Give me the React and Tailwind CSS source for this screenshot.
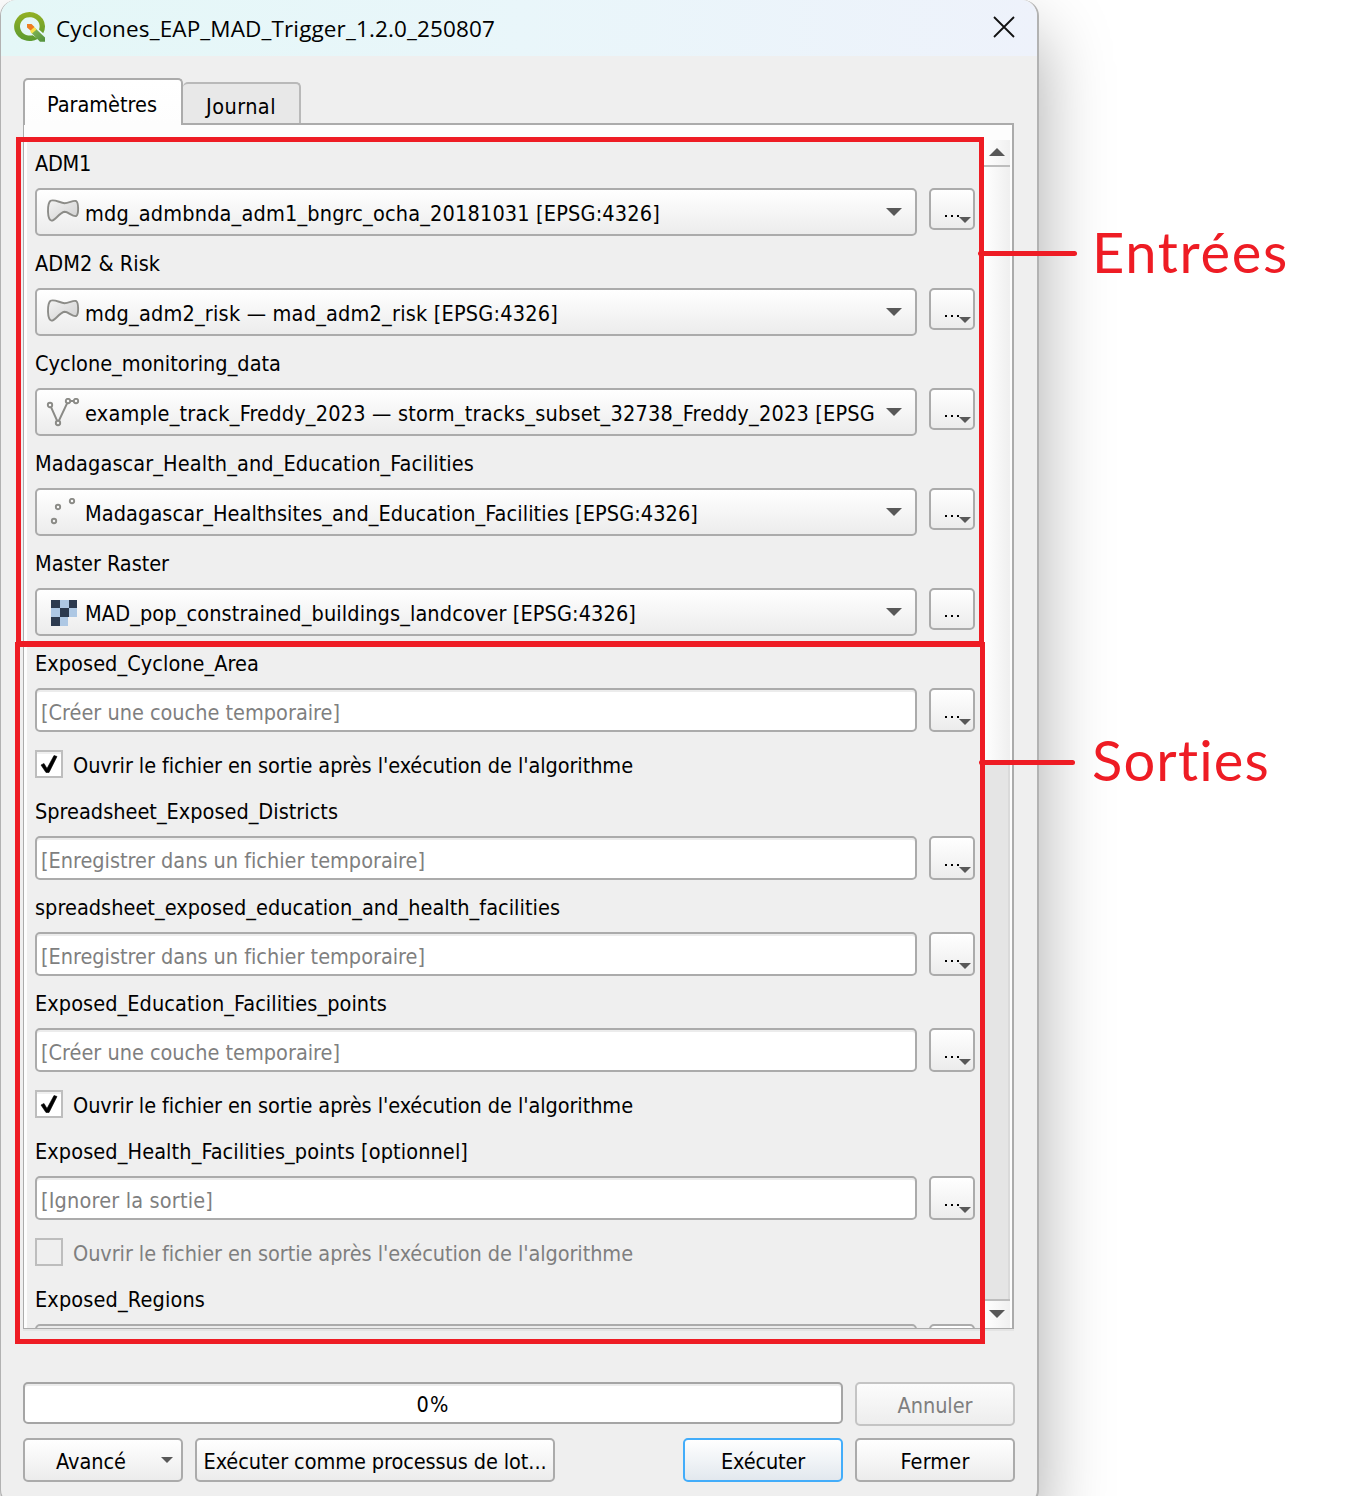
import { useLayoutEffect, useRef, useState } from "react";

// Text set to a given line length by tracking.
function Fit({ w, children, className = "" }) {
  const ref = useRef(null);
  const [spacing, setSpacing] = useState(0);
  useLayoutEffect(() => {
    const natural = ref.current.getBoundingClientRect().width;
    setSpacing((w - natural) / children.length);
  }, []);
  return (
    <span
      ref={ref}
      className={"inline-block whitespace-pre " + className}
      style={{ letterSpacing: spacing + "px" }}
    >
      {children}
    </span>
  );
}

function PolygonIcon() {
  return (
    <svg className="mt-px" width="34" height="26" viewBox="0 0 34 26" fill="none">
      <defs>
        <linearGradient id="poly" x1="0" y1="0" x2="1" y2="1">
          <stop offset="0" stopColor="#f4f4f4" />
          <stop offset="1" stopColor="#cfcfcf" />
        </linearGradient>
      </defs>
      <path
        d="M4.500 2.800C8 0.800 14 4.800 18.500 5.200C23 5.200 27 2 30 3C32.800 4.500 32.800 16.500 30.200 18C27 19.300 22.500 13.800 18.500 13.800C13 15 9 22.800 5.500 22.600C1 21.500 1 6 4.500 2.800Z"
        fill="url(#poly)"
        stroke="#8c8c88"
        strokeWidth="1.900"
      />
    </svg>
  );
}

function LineIcon() {
  return (
    <svg className="mt-px" width="34" height="30" viewBox="0 0 34 30" fill="none" stroke="#8a8a86" strokeWidth="1.900">
      <path d="M5 9L11 22.500M13 22.500L21 5.500M24 3H28" />
      <circle cx="4" cy="7" r="2.200" />
      <circle cx="12" cy="25" r="2.200" />
      <circle cx="22" cy="3" r="2.200" />
      <circle cx="30" cy="3" r="2.200" />
    </svg>
  );
}

function PointIcon() {
  return (
    <svg className="mt-px" width="34" height="30" viewBox="0 0 34 30" fill="none" stroke="#8a8a86" strokeWidth="1.900">
      <circle cx="12" cy="9" r="2.200" />
      <circle cx="26" cy="3" r="2.200" />
      <circle cx="8" cy="23" r="2.200" />
    </svg>
  );
}

function RasterIcon() {
  return (
    <svg width="34" height="26" viewBox="-1 0 34 26" shapeRendering="crispEdges">
      <path d="M13 0h9v8h-9zM4 8h9v9H4zM22 8h8v9h-8zM13 17h8v9h-8z" fill="#aec8e4" />
      <path d="M4 0h9v8H4zM22 0h8v8h-8zM13 8h9v9h-9zM4 17h9v9H4z" fill="#2c3a4f" />
    </svg>
  );
}

function QgisIcon() {
  return (
    <svg width="32" height="30" viewBox="0 0 32 30">
      <defs>
        <linearGradient id="ring" x1="0" y1="0" x2="0" y2="1">
          <stop offset="0" stopColor="#93b023" />
          <stop offset="1" stopColor="#5b9a31" />
        </linearGradient>
        <linearGradient id="tail" x1="0" y1="0" x2="1" y2="1">
          <stop offset="0" stopColor="#8cbb5a" />
          <stop offset="1" stopColor="#4f8f3a" />
        </linearGradient>
      </defs>
      <path
        fillRule="evenodd"
        fill="url(#ring)"
        d="M15.500 0A15.500 14.500 0 0 1 29.200 21.300L25 17.500A9.800 9.200 0 1 0 18.500 23.200L24 26.700A15.500 14.500 0 1 1 15.500 0Z"
      />
      <path d="M20.500 15.500L31 25.500V29.800H26L17 20.500Z" fill="url(#tail)" />
      <path d="M18.500 14L22 16.500V18L18 21.500L16.500 20V17Z" fill="#f6e04b" />
      <path d="M13 12H17.500L20.500 15L16.500 18.500L13 15.500Z" fill="#ee7d22" />
    </svg>
  );
}

function Arrow({ className = "", up }) {
  return (
    <svg className={className} viewBox="0 0 16 8" preserveAspectRatio="none">
      <path d={up ? "M0 8L8 0L16 8Z" : "M0 0L8 8L16 0Z"} fill="#585858" />
    </svg>
  );
}

const BUTTON = "rounded-[5px] border-2 border-[#ababab] bg-linear-to-b from-white to-[#ececec]";

function MoreButton({ menu, tall }) {
  return (
    <button className={`${BUTTON} relative w-[46px] shrink-0 ${tall ? "h-[44px]" : "h-[42px]"}`}>
      <span className="mt-[14px] ml-[14px] flex gap-1">
        <i className="h-[2px] w-[2px] bg-black" />
        <i className="h-[2px] w-[2px] bg-black" />
        <i className="h-[2px] w-[2px] bg-black" />
      </span>
      {menu && (
        <Arrow className={`absolute left-[28px] h-[6px] w-[12px] ${tall ? "top-[29px]" : "top-[27px]"}`} />
      )}
    </button>
  );
}

function Label({ w, children, className = "h-[52px]" }) {
  return (
    <div className={`flex items-end pb-[10px] ${className}`}>
      <Fit w={w}>{children}</Fit>
    </div>
  );
}

function Combo({ label, lw, icon, text, w, menu = true, first }) {
  return (
    <div>
      <Label w={lw} className={first ? "h-[48px]" : "h-[52px]"}>{label}</Label>
      <div className="flex h-[48px] items-start gap-3">
        <div className={`${BUTTON} flex h-[48px] w-[882px] items-center`}>
          <div className="ml-[9px] flex h-[30px] w-[39px] items-start">{icon}</div>
          <Fit w={w} className="mt-[3px]">{text}</Fit>
          <Arrow className="mr-[13px] mb-[1px] ml-auto h-[8px] w-[16px]" />
        </div>
        <MoreButton menu={menu} />
      </div>
    </div>
  );
}

function Output({ label, lw, text, w, tallLabel }) {
  return (
    <div>
      <Label w={lw} className={tallLabel ? "h-[58px]" : "h-[52px]"}>{label}</Label>
      <div className="flex gap-3">
        <div className="flex h-[44px] w-[882px] items-center rounded-[5px] border-2 border-[#ababab] bg-white pt-[5px] pl-[4px] text-[#7f7f7f] shadow-[inset_0_2px_0_#ececec]">
          <Fit w={w}>{text}</Fit>
        </div>
        <MoreButton menu tall />
      </div>
    </div>
  );
}

function OpenCheck({ checked }) {
  return (
    <div className={`mt-[18px] flex h-[28px] items-center gap-[10px] ${checked ? "" : "text-[#7f7f7f]"}`}>
      <span className={`flex h-[28px] w-[28px] items-center justify-center border-2 border-[#bdbdbd] ${checked ? "bg-white shadow-[inset_0_2px_0_#f0f0f0]" : ""}`}>
        {checked && (
          <svg width="18" height="20" viewBox="0 0 18 20">
            <path d="M1 11L4 9.500L7 14.500L14 1.500L17 2.500L9 18.500H6Z" fill="#000" stroke="#000" strokeWidth="0.600" strokeLinejoin="round" />
          </svg>
        )}
      </span>
      <Fit w={560} className="mt-[4px]">Ouvrir le fichier en sortie après l'exécution de l'algorithme</Fit>
    </div>
  );
}

export default function App() {
  return (
    <div className="relative h-[1496px] w-[1349px] overflow-hidden bg-white font-['DejaVu_Sans_Condensed','DejaVu_Sans',sans-serif] text-[21.500px] leading-[28px] text-black">
      <div className="flex h-[1506px] w-[1039px] flex-col rounded-2xl border-2 border-l border-t-0 border-[#b2b2b2] bg-[#efefef] shadow-[0_34px_70px_rgba(0,0,0,0.340)]">
        <header className="flex h-[56px] shrink-0 items-center rounded-t-2xl bg-linear-to-r from-[#e4f7f7] via-[#e9f6fa] to-[#eef2fb] pl-[13px] font-['Open_Sans',sans-serif] text-[22.500px]">
          <div className="mb-[2px]"><QgisIcon /></div>
          <Fit w={439} className="mt-[2px] ml-[10px]">Cyclones_EAP_MAD_Trigger_1.2.0_250807</Fit>
          <svg className="mr-[22px] mb-[2px] ml-auto" width="22" height="22" viewBox="0 0 22 22">
            <path d="M1 1L21 21M21 1L1 21" stroke="#111" strokeWidth="1.800" />
          </svg>
        </header>

        <nav className="relative z-10 mt-[22px] ml-[22px] flex h-[47px] items-start">
          <div className="flex h-[47px] w-[160px] justify-center rounded-t-[5px] border-2 border-b-0 border-[#ababab] bg-linear-to-b from-white to-[#fdfdfd] pt-[11px] pr-[2px]">
            <Fit w={110}>Paramètres</Fit>
          </div>
          <div className="mt-[4px] flex h-[41px] w-[118px] justify-center rounded-t-[5px] border-2 border-b-0 border-l-0 border-[#b9b9b9] bg-[#e8e8e8] pt-[9px]">
            <Fit w={70}>Journal</Fit>
          </div>
        </nav>

        <section className="-mt-[2px] ml-[22px] flex h-[1206px] w-[991px] shrink-0 border-t-2 border-r-2 border-b border-l border-[#ababab] bg-[#fdfdfd] pt-[15px] pr-[2px] pl-[3px] shadow-[0_2px_0_#e4e4e4]">
          <div className="h-[1188px] w-[957px] overflow-hidden bg-[#efefef] pl-2">
            <Combo first label="ADM1" lw={56} icon={<PolygonIcon />} text="mdg_admbnda_adm1_bngrc_ocha_20181031 [EPSG:4326]" w={575} />
            <Combo label="ADM2 & Risk" lw={125} icon={<PolygonIcon />} text="mdg_adm2_risk — mad_adm2_risk [EPSG:4326]" w={473} />
            <Combo label="Cyclone_monitoring_data" lw={246} icon={<LineIcon />} text="example_track_Freddy_2023 — storm_tracks_subset_32738_Freddy_2023 [EPSG" w={790} />
            <Combo label="Madagascar_Health_and_Education_Facilities" lw={439} icon={<PointIcon />} text="Madagascar_Healthsites_and_Education_Facilities [EPSG:4326]" w={613} />
            <Combo label="Master Raster" lw={134} icon={<div className="mt-[3px]"><RasterIcon /></div>} text="MAD_pop_constrained_buildings_landcover [EPSG:4326]" w={551} menu={false} />
            <Output label="Exposed_Cyclone_Area" lw={224} text="[Créer une couche temporaire]" w={299} />
            <OpenCheck checked />
            <Output tallLabel label="Spreadsheet_Exposed_Districts" lw={303} text="[Enregistrer dans un fichier temporaire]" w={384} />
            <Output label="spreadsheet_exposed_education_and_health_facilities" lw={525} text="[Enregistrer dans un fichier temporaire]" w={384} />
            <Output label="Exposed_Education_Facilities_points" lw={352} text="[Créer une couche temporaire]" w={299} />
            <OpenCheck checked />
            <Output tallLabel label="Exposed_Health_Facilities_points [optionnel]" lw={433} text="[Ignorer la sortie]" w={172} />
            <OpenCheck />
            <Output tallLabel label="Exposed_Regions" lw={170} text="" w={0} />
          </div>
          <div className="flex h-[1188px] w-[26px] flex-col">
            <div className="flex h-[27px] items-center justify-center border-b-2 border-[#bdbdbd] bg-linear-to-r from-white to-[#f0f0f0] pb-px">
              <Arrow up className="h-[8px] w-[16px]" />
            </div>
            <div className="h-[597px] bg-linear-to-r from-white to-[#efefef]" />
            <div className="flex-1 border-r-2 border-[#dadada] bg-[#e5e5e5]" />
            <div className="flex h-[29px] items-center justify-center border-t-2 border-[#bdbdbd] bg-linear-to-r from-white to-[#f0f0f0] pb-[2px]">
              <Arrow className="h-[8px] w-[16px]" />
            </div>
          </div>
        </section>

        <footer className="mt-[53px] ml-[22px] flex w-[992px] flex-col gap-3">
          <div className="flex gap-3">
            <div className="flex h-[42px] w-[820px] items-center justify-center rounded-[5px] border-2 border-[#a5a5a5] bg-white pt-[4px] shadow-[inset_0_2px_0_#ececec]">
              <Fit w={33}>0%</Fit>
            </div>
            <button className="h-[44px] w-[160px] rounded-[5px] border-2 border-[#c4c4c4] bg-linear-to-b from-[#fcfcfc] to-[#ededed] pt-[4px] text-[#7f7f7f]">
              <Fit w={75}>Annuler</Fit>
            </button>
          </div>
          <div className="flex h-[44px] gap-3">
            <button className={`${BUTTON} flex w-[160px] items-center pt-[4px] pl-[31px]`}>
              <Fit w={70}>Avancé</Fit>
              <Arrow className="mr-[8px] mb-[5px] ml-auto h-[6px] w-[12px]" />
            </button>
            <button className={`${BUTTON} w-[360px] pt-[4px]`}>
              <Fit w={343}>Exécuter comme processus de lot...</Fit>
            </button>
            <button className="ml-auto w-[160px] rounded-[5px] border-2 border-[#43adfa] bg-linear-to-b from-white to-[#e2e8ee] pt-[4px]">
              <Fit w={84}>Exécuter</Fit>
            </button>
            <button className={`${BUTTON} w-[160px] pt-[4px]`}>
              <Fit w={69}>Fermer</Fit>
            </button>
          </div>
        </footer>
      </div>

      {/* Annotations over the dialog */}
      <div className="pointer-events-none absolute inset-0 z-20 font-['Lato',sans-serif] text-[56px] leading-[68px] text-[#ee1c24]">
        <div className="absolute top-[137px] left-[16px] h-[509px] w-[968px] border-5 border-[#ee1c24]" />
        <div className="absolute top-[642px] left-[15px] h-[702px] w-[970px] border-5 border-[#ee1c24]" />
        <div className="absolute top-[251px] left-[978px] h-[5px] w-[99px] rounded-sm bg-[#ee1c24]" />
        <div className="absolute top-[760px] left-[979px] h-[5px] w-[96px] rounded-sm bg-[#ee1c24]" />
        <div className="absolute top-[218px] left-[1092px]"><Fit w={197}>Entrées</Fit></div>
        <div className="absolute top-[726px] left-[1092px]"><Fit w={179}>Sorties</Fit></div>
      </div>
    </div>
  );
}
